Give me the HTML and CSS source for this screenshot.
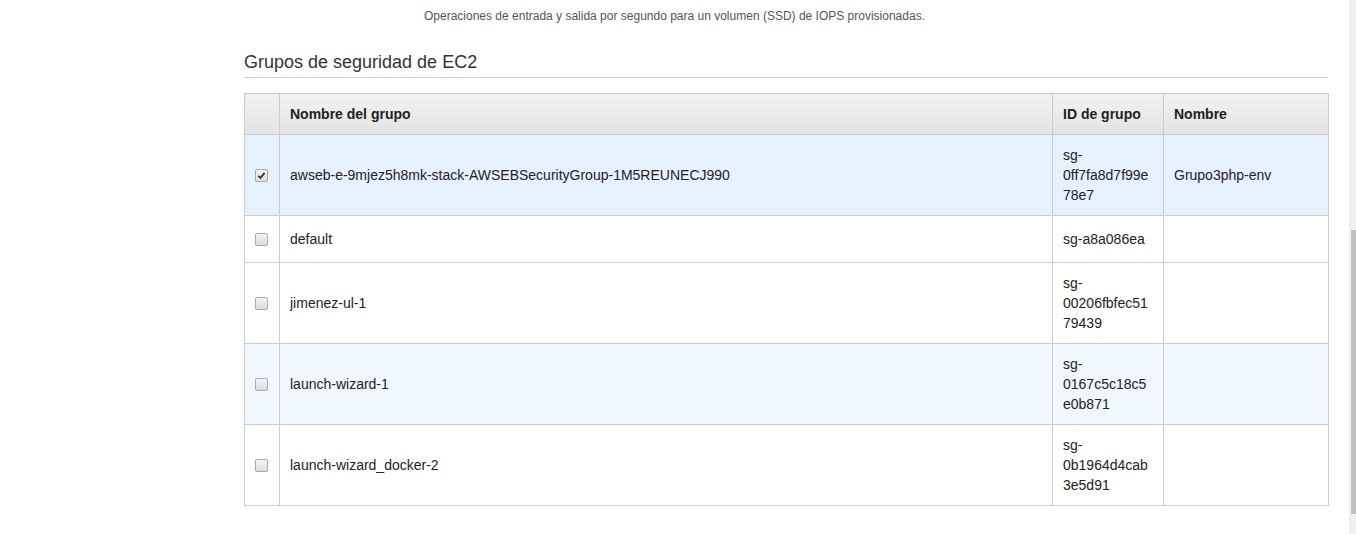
FILE: index.html
```html
<!DOCTYPE html>
<html lang="es">
<head>
<meta charset="utf-8">
<title>Grupos de seguridad de EC2</title>
<link rel="stylesheet" href="styles.css">
</head>
<body>
<div class="page">
  <p class="caption">Operaciones de entrada y salida por segundo para un volumen (SSD) de IOPS provisionadas.</p>
  <h2 class="heading">Grupos de seguridad de EC2</h2>
  <table class="sg-table">
    <colgroup>
      <col class="c-check">
      <col class="c-name">
      <col class="c-id">
      <col class="c-label">
    </colgroup>
    <thead>
      <tr>
        <th></th>
        <th>Nombre del grupo</th>
        <th>ID de grupo</th>
        <th>Nombre</th>
      </tr>
    </thead>
    <tbody>
      <tr class="row selected">
        <td class="check"><span class="cb checked"><svg viewBox="0 0 12 12" width="12" height="12"><path d="M2.6 6.4 L4.8 8.6 L9.4 3.2" fill="none" stroke="#333" stroke-width="1.9"/></svg></span></td>
        <td>awseb-e-9mjez5h8mk-stack-AWSEBSecurityGroup-1M5REUNECJ990</td>
        <td class="id">sg-0ff7fa8d7f99e78e7</td>
        <td>Grupo3php-env</td>
      </tr>
      <tr class="row short">
        <td class="check"><span class="cb"></span></td>
        <td>default</td>
        <td class="id">sg-a8a086ea</td>
        <td></td>
      </tr>
      <tr class="row">
        <td class="check"><span class="cb"></span></td>
        <td>jimenez-ul-1</td>
        <td class="id">sg-00206fbfec5179439</td>
        <td></td>
      </tr>
      <tr class="row hover">
        <td class="check"><span class="cb"></span></td>
        <td>launch-wizard-1</td>
        <td class="id">sg-0167c5c18c5e0b871</td>
        <td></td>
      </tr>
      <tr class="row">
        <td class="check"><span class="cb"></span></td>
        <td>launch-wizard_docker-2</td>
        <td class="id">sg-0b1964d4cab3e5d91</td>
        <td></td>
      </tr>
    </tbody>
  </table>
</div>
<div class="scrollbar"><div class="thumb"></div></div>
</body>
</html>
```
FILE: styles.css
```css
html, body {
  margin: 0;
  padding: 0;
  background: #ffffff;
}
body {
  font-family: "Liberation Sans", Arial, sans-serif;
  color: #333333;
  overflow: hidden;
}
.page {
  padding-left: 244px;
  width: 1084px;
}
.caption {
  margin: 0 0 0 180px;
  padding-top: 8px;
  font-size: 12px;
  line-height: 16px;
  color: #555555;
}
.heading {
  margin: 27px 0 0 0;
  padding-bottom: 4px;
  font-size: 18px;
  line-height: 22px;
  font-weight: normal;
  color: #333333;
  border-bottom: 1px solid #cccccc;
}
.sg-table {
  margin-top: 15px;
  width: 1084px;
  table-layout: fixed;
  border-collapse: collapse;
  border: 1px solid #cccccc;
  font-size: 14px;
  line-height: 20px;
  color: #222222;
}
.c-check { width: 35px; }
.c-name { width: 773px; }
.c-id { width: 111px; }
.c-label { width: 165px; }
.sg-table th {
  height: 40px;
  padding: 0 10px;
  text-align: left;
  font-weight: bold;
  color: #222222;
  background: linear-gradient(#f2f2f2, #e3e3e3);
  border: 1px solid #cccccc;
}
.sg-table td {
  padding: 10px 10px;
  border: 1px solid #cccccc;
  vertical-align: middle;
  overflow-wrap: break-word;
}
.row.short { height: 47px; }
.row.selected td { background: #e5f1fc; }
.row.hover td { background: #f0f7fe; }
.sg-table td.check {
  padding: 0;
  text-align: center;
}
.cb {
  display: inline-block;
  width: 11px;
  height: 11px;
  margin-right: 2px;
  border: 1px solid #a9a9a9;
  border-radius: 2px;
  background: linear-gradient(#f4f4f4, #dcdcdc);
  vertical-align: middle;
  position: relative;
  top: -1px;
}
.cb svg {
  display: block;
  width: 11px;
  height: 11px;
}
.scrollbar {
  position: absolute;
  top: 0;
  right: 0;
  width: 7px;
  height: 534px;
  background: #f0f0f0;
}
.thumb {
  position: absolute;
  top: 230px;
  left: 2px;
  width: 5px;
  height: 284px;
  background: #c1c1c1;
}
```
